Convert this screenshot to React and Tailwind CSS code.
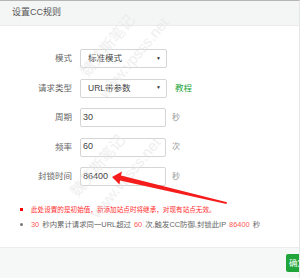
import React from 'react';

const font = { fontFamily: '"Liberation Sans", "Noto Sans CJK SC", sans-serif' };

const Select = ({ value }) => (
  <div className="w-[87px] h-[19px] border border-[#d5d5d5] rounded-[2px] flex items-center justify-between pl-[7px] pr-[5px] text-[8.5px] text-[#444] bg-white">
    <span>{value}</span>
    <span className="text-[5px] text-[#333]">▼</span>
  </div>
);

const Input = ({ value }) => (
  <div className="w-[86px] h-[19px] border border-[#d5d5d5] rounded-[2px] flex items-center pl-[2px] text-[9px] text-[#444] bg-white">
    {value}
  </div>
);

const Row = ({ label, children }) => (
  <div className="flex items-center">
    <div className="w-[72px] text-right text-[8.5px] text-[#666]">{label}</div>
    <div className="ml-[8px] flex items-center">{children}</div>
  </div>
);

const Mark = ({ className, children }) => (
  <div className={`pointer-events-none absolute -translate-x-1/2 -translate-y-1/2 -rotate-[50deg] whitespace-nowrap text-[#e6e6e6] opacity-60 ${className}`}>
    {children}
  </div>
);

export default function App() {
  return (
    <div style={font} className="relative w-[300px] h-[278px] bg-white border-t border-[#b5b5b5] border-r border-r-[#e6e6e6] flex flex-col overflow-hidden">
      <div className="h-[25px] bg-[#f4f6f6] border-b border-[#ececec] flex items-center pl-[12px] text-[9px] text-[#555] shrink-0">
        设置CC规则
      </div>

      <div className="flex-1 pt-[23px] flex flex-col">
        <div className="flex flex-col gap-[10.5px]">
          <Row label="模式">
            <Select value="标准模式" />
          </Row>
          <Row label="请求类型">
            <Select value="URL带参数" />
            <span className="ml-[8px] text-[8.5px] text-[#20a53a]">教程</span>
          </Row>
          <Row label="周期">
            <Input value="30" />
            <span className="ml-[6px] text-[8px] text-[#999]">秒</span>
          </Row>
          <Row label="频率">
            <Input value="60" />
            <span className="ml-[6px] text-[8px] text-[#999]">次</span>
          </Row>
          <Row label="封锁时间">
            <Input value="86400" />
            <span className="ml-[6px] text-[8px] text-[#999]">秒</span>
          </Row>
        </div>

        <ul className="mt-[19px] pl-[20px] flex flex-col gap-[4px]">
          <li className="flex items-center text-[6.6px] text-[#ff2a2a]">
            <span className="w-[3px] h-[3px] bg-[#f00] mr-[8px]" />
            此处设置的是初始值，新添加站点时将继承，对现有站点无效。
          </li>
          <li className="flex items-center text-[7.4px] text-[#666]">
            <span className="w-[3px] h-[3px] rounded-full bg-[#777] mr-[8px]" />
            <span className="text-[#ff5555] mr-[3px]">30</span>秒内累计请求同一URL超过
            <span className="text-[#ff5555] mx-[3px]">60</span>次,触发CC防御,封锁此IP
            <span className="text-[#ff5555] mx-[3px]">86400</span>秒
          </li>
        </ul>
      </div>

      <div className="h-[31px] shrink-0 bg-[#f6f8f8] border-t border-[#ececec] flex items-start justify-end pt-[6px]">
        <div className="w-[13px] h-[18px] bg-[#20a53a] rounded-l-[2px] overflow-hidden flex items-center pl-[3px] text-[8.5px] text-white whitespace-nowrap">
          确定
        </div>
      </div>

      <Mark className="left-[108px] top-[45px] text-[15px]">魏艾斯笔记</Mark>
      <Mark className="left-[134px] top-[57px] text-[15px]">www.vpsss.net</Mark>
      <Mark className="left-[98px] top-[165px] text-[15px]">魏艾斯笔记</Mark>
      <Mark className="left-[126px] top-[177px] text-[15px]">www.vpsss.net</Mark>

      <svg className="pointer-events-none absolute left-0 top-0" width="300" height="278">
        <polygon
          points="112,176 122,170.5 121,174.5 227,201.2 226.5,203 120,179.5 119.5,183.5"
          fill="#f51c1c"
        />
      </svg>
    </div>
  );
}
